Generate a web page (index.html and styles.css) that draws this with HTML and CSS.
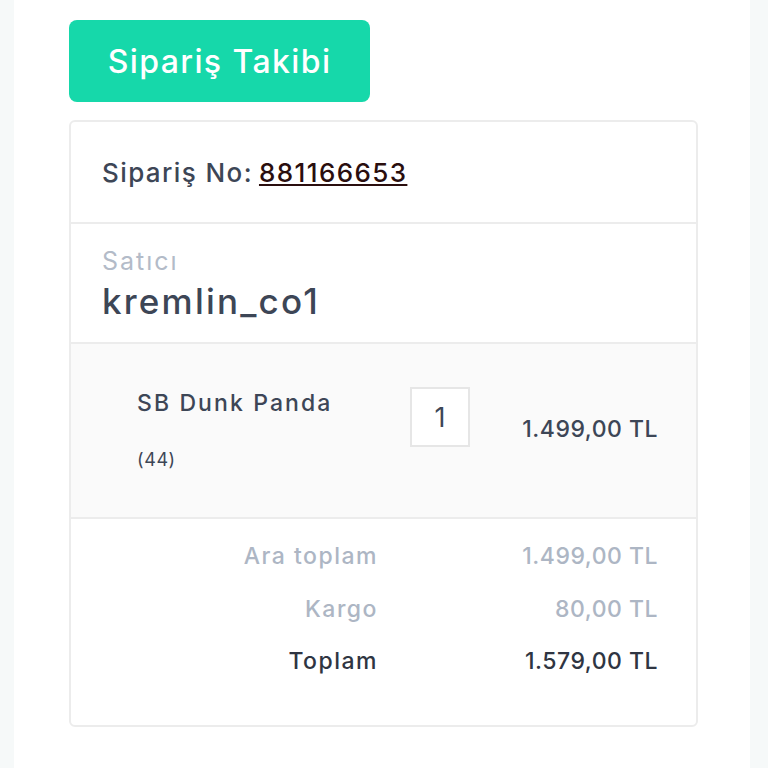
FILE: index.html
```html
<!DOCTYPE html>
<html lang="tr">
<head>
    <meta charset="UTF-8">
    <title>Sipariş Takibi</title>
    <link rel="stylesheet" href="styles.css">
</head>
<body>
    <div class="page">
        <button class="title-btn">Sipariş Takibi</button>

        <div class="card">
            <div class="section order-no">
                Sipariş No: <a href="#">881166653</a>
            </div>

            <div class="section seller">
                <div class="seller-label">Satıcı</div>
                <div class="seller-name">kremlin_co1</div>
            </div>

            <!-- ürün satırı -->
            <div class="item">
                <div class="item-info">
                    <div class="item-name">SB Dunk Panda</div>
                    <div class="item-size">(44)</div>
                </div>
                <div class="qty">1</div>
                <div class="item-price">1.499,00 TL</div>
            </div>

            <div class="totals">
                <div class="row muted">
                    <span class="label">Ara toplam</span>
                    <span class="value">1.499,00 TL</span>
                </div>
                <div class="row muted">
                    <span class="label">Kargo</span>
                    <span class="value">80,00 TL</span>
                </div>
                <div class="row total">
                    <span class="label">Toplam</span>
                    <span class="value">1.579,00 TL</span>
                </div>
            </div>
        </div>
    </div>
</body>
</html>
```

FILE: styles.css
```css
body {
    margin: 0;
    background-color: #f6f9f9;
    font-family: Inter, "Noto Sans", sans-serif;
    color: #3d4656;
}
.page {
    background-color: white;
    margin: 0 18px 0 14px;
    min-height: 768px;
    padding: 20px 0 0 55px;
    box-sizing: border-box;
}
.title-btn {
    display: block;
    width: 301px;
    height: 82px;
    background-color: #16d8aa;
    color: white;
    border: none;
    border-radius: 8px;
    font-family: inherit;
    font-size: 32px;
    font-weight: 500;
    letter-spacing: 1.4px;
    cursor: pointer;
}
.card {
    margin-top: 18px;
    width: 629px;
    box-sizing: border-box;
    border: 2px solid #ececec;
    border-radius: 6px;
    overflow: hidden;
}
.section {
    padding: 0 31px;
    border-bottom: 2px solid #ececec;
}
.order-no {
    height: 100px;
    display: flex;
    align-items: center;
    font-size: 26px;
    font-weight: 500;
    letter-spacing: 1.4px;
}
.order-no a {
    color: #2a0e0e;
    margin-left: 6px;
}
.seller {
    height: 120px;
    padding-top: 20px;
    box-sizing: border-box;
}
.seller-label {
    color: #b3bbc8;
    font-size: 25px;
    letter-spacing: 2px;
    line-height: 34px;
}
.seller-name {
    font-size: 35px;
    font-weight: 500;
    letter-spacing: 2.2px;
    line-height: 46px;
}
.item {
    height: 175px;
    background-color: #fafafa;
    border-bottom: 2px solid #ececec;
    display: grid;
    grid-template-columns: 273px 60px 1fr;
    align-items: start;
    padding: 42px 38px 0 66px;
    box-sizing: border-box;
}
.item-name {
    font-size: 23px;
    font-weight: 500;
    letter-spacing: 2.1px;
    line-height: 34px;
}
.item-size {
    font-size: 18px;
    margin-top: 29px;
    letter-spacing: 0.6px;
}
.qty {
    width: 60px;
    height: 60px;
    box-sizing: border-box;
    background-color: white;
    border: 2px solid #e6e6e6;
    display: flex;
    align-items: center;
    justify-content: center;
    font-size: 27px;
    margin-top: 1px;
}
.item-price {
    text-align: right;
    font-size: 23px;
    font-weight: 500;
    letter-spacing: 0.5px;
    margin-top: 29px;
}
.totals {
    padding: 11px 38px 37px 0;
}
.row {
    display: grid;
    grid-template-columns: 307px 1fr;
    height: 52.5px;
    align-items: center;
    font-size: 23px;
    font-weight: 500;
    letter-spacing: 0.5px;
}
.row span {
    text-align: right;
}
.row .label {
    letter-spacing: 1.5px;
}
.muted {
    color: #adb6c4;
}
.total {
    color: #2f3542;
}
```
